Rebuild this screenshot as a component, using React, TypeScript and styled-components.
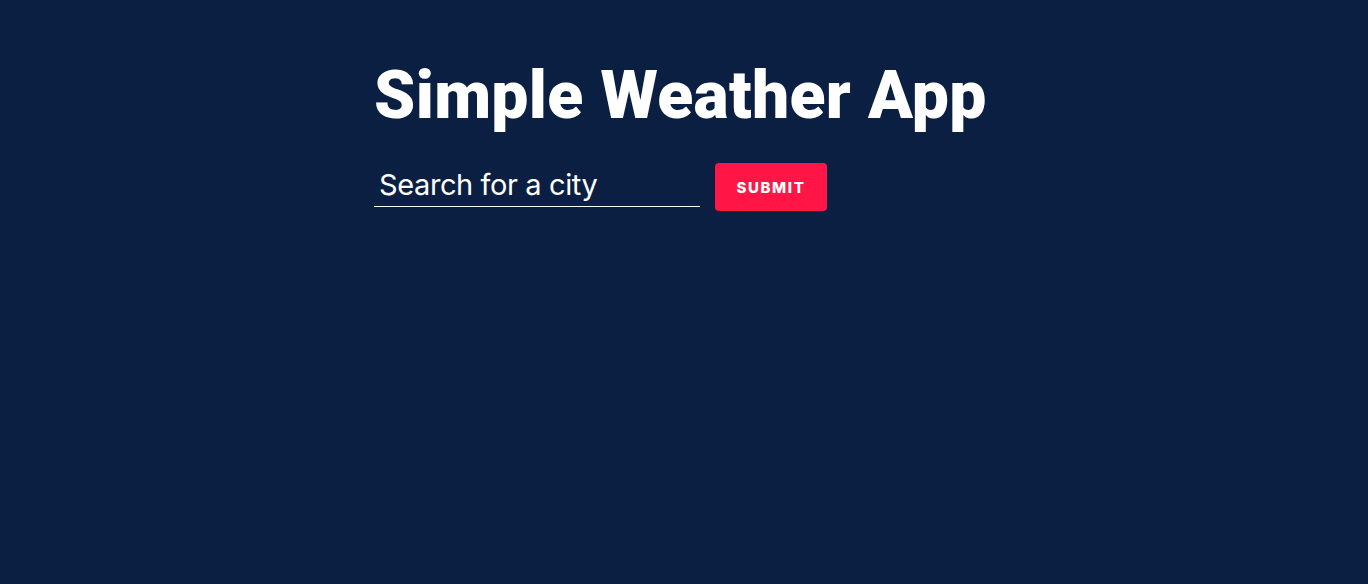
import React from "react";
import styled, { createGlobalStyle } from "styled-components";

const Global = createGlobalStyle`
  html, body { margin: 0; padding: 0; background: #0b1f42; }
  body { font-family: Inter, "Noto Sans", sans-serif; min-height: 584px; }
  * { box-sizing: border-box; }
`;

const Page = styled.main`
  min-height: 584px;
  background: #0b1f42;
  display: flex;
  justify-content: center;
`;

const Container = styled.div`
  width: 620px;
  padding-top: 56px;
  display: flex;
  flex-direction: column;
`;

const Title = styled.h1`
  margin: 0;
  font-family: Roboto, sans-serif;
  font-weight: 900;
  font-size: 66px;
  line-height: 79px;
  letter-spacing: 0.35px;
  white-space: nowrap;
  color: #ffffff;
`;

const Form = styled.form`
  display: flex;
  align-items: flex-start;
  gap: 15px;
  margin-top: 28px;
`;

const Input = styled.input`
  width: 326px;
  height: 44px;
  background: transparent;
  border: none;
  border-bottom: 1px solid #ffffff;
  color: #ffffff;
  font-family: Inter, sans-serif;
  font-size: 29px;
  letter-spacing: -0.4px;
  padding: 0 0 0 5px;
  outline: none;
  &::placeholder { color: #ffffff; opacity: 1; }
`;

const Button = styled.button`
  width: 112px;
  height: 48px;
  background: #ff1546;
  border: none;
  border-radius: 4px;
  color: #ffffff;
  font-family: Inter, sans-serif;
  font-weight: 800;
  font-size: 15px;
  letter-spacing: 1.6px;
  text-transform: uppercase;
  cursor: pointer;
`;

export default function App() {
  return (
    <>
      <Global />
      <Page>
        <Container>
          <Title>Simple Weather App</Title>
          <Form onSubmit={(e) => e.preventDefault()}>
            <Input placeholder="Search for a city" />
            <Button type="submit">Submit</Button>
          </Form>
        </Container>
      </Page>
    </>
  );
}
